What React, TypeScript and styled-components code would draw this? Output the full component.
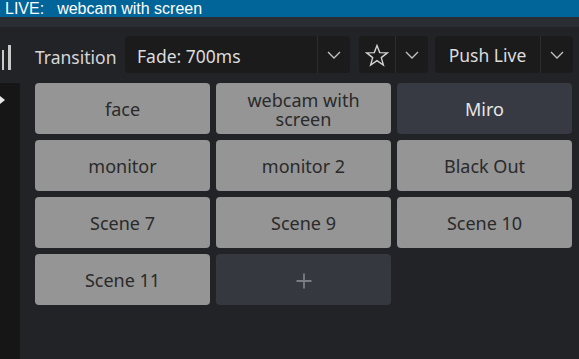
import React from "react";
import styled, { createGlobalStyle } from "styled-components";

const GlobalStyle = createGlobalStyle`
  html, body { margin: 0; padding: 0; background: #222327; overflow: hidden; }
  * { box-sizing: border-box; }
`;

const Page = styled.div`
  width: 579px;
  height: 359px;
  display: flex;
  flex-direction: column;
  background: #222327;
  font-family: "Noto Sans", "Open Sans", sans-serif;
`;

const LiveBar = styled.div`
  height: 17px;
  background: #02659a;
  color: #ffffff;
  font-family: "Liberation Sans", Arial, sans-serif;
  font-size: 16px;
  line-height: 17px;
  padding-left: 5px;
  display: flex;
  white-space: nowrap;
  overflow: hidden;
`;

const LiveLabel = styled.span`
  margin-right: 13px;
`;

const SubBar = styled.div`
  height: 10px;
  background: #2a2d32;
`;

const Main = styled.div`
  flex: 1;
  display: flex;
`;

const SideStrip = styled.div`
  width: 20px;
  display: flex;
  flex-direction: column;
`;

const SideTop = styled.div`
  height: 56px;
  position: relative;
`;

const SideBottom = styled.div`
  flex: 1;
  background: #161616;
  position: relative;
`;

const Bar = styled.div<{ $left: number; $top: number; $w: number; $h: number }>`
  position: absolute;
  left: ${(p) => p.$left}px;
  top: ${(p) => p.$top}px;
  width: ${(p) => p.$w}px;
  height: ${(p) => p.$h}px;
  background: #c9c9c9;
`;

const Arrow = styled.div`
  position: absolute;
  left: 0;
  top: 13px;
  width: 0;
  height: 0;
  border-top: 4px solid transparent;
  border-bottom: 4px solid transparent;
  border-left: 5px solid #e8e8e8;
`;

const Content = styled.div`
  flex: 1;
  padding: 9px 0 0 15px;
  display: flex;
  flex-direction: column;
`;

const Toolbar = styled.div`
  height: 37px;
  display: flex;
  align-items: center;
`;

const Label = styled.div`
  width: 90px;
  color: #d6d6d6;
  font-size: 17.5px;
  padding-top: 4px;
  white-space: nowrap;
`;

const Group = styled.div<{ $w: number; $ml: number }>`
  width: ${(p) => p.$w}px;
  margin-left: ${(p) => p.$ml}px;
  height: 37px;
  background: #1b1b1c;
  border-radius: 4px;
  display: flex;
  overflow: hidden;
`;

const Main1 = styled.div<{ $center?: boolean }>`
  flex: 1;
  display: flex;
  align-items: center;
  justify-content: ${(p) => (p.$center ? "center" : "flex-start")};
  padding-left: ${(p) => (p.$center ? 0 : 12)}px;
  padding-top: ${(p) => (p.$center ? 1 : 3)}px;
  color: #dcdcdc;
  font-size: 17.5px;
  white-space: nowrap;
  border-right: 1px solid #2c2d31;
`;

const Chevron = styled.div`
  width: 32px;
  display: flex;
  align-items: center;
  justify-content: center;
`;

const Grid = styled.div`
  margin-top: 10px;
  display: grid;
  grid-template-columns: repeat(3, 175px);
  grid-auto-rows: 51px;
  gap: 6px;
`;

const SceneButton = styled.div<{ $variant?: "normal" | "active" | "add" }>`
  border-radius: 4px;
  background: ${(p) =>
    p.$variant === "active" ? "#373a42" : p.$variant === "add" ? "#363840" : "#959595"};
  color: ${(p) => (p.$variant === "active" ? "#e6e6e6" : "#2a2a2a")};
  display: flex;
  align-items: center;
  justify-content: center;
  text-align: center;
  font-size: 18px;
  line-height: 19px;
  padding: 2px 30px 0;
`;

const ChevronIcon = () => (
  <svg width="14" height="8" viewBox="0 0 14 8">
    <path d="M1 1 L7 7 L13 1" fill="none" stroke="#c4c4c4" strokeWidth="1.3" />
  </svg>
);

const StarIcon = () => (
  <svg width="24" height="23" viewBox="0 0 24 23">
    <path
      d="M12 1.5 L14.7 8.6 L22.3 8.9 L16.3 13.6 L18.4 21 L12 16.7 L5.6 21 L7.7 13.6 L1.7 8.9 L9.3 8.6 Z"
      fill="none"
      stroke="#d2d2d2"
      strokeWidth="1.4"
      strokeLinejoin="miter"
    />
  </svg>
);

const PlusIcon = () => (
  <svg width="16" height="16" viewBox="0 0 16 16" aria-label="+">
    <path d="M8 0.5 V15.5 M0.5 8 H15.5" fill="none" stroke="#7b7d83" strokeWidth="1.8" />
  </svg>
);

const scenes: { name: string; variant?: "normal" | "active" | "add" }[] = [
  { name: "face" },
  { name: "webcam with screen" },
  { name: "Miro", variant: "active" },
  { name: "monitor" },
  { name: "monitor 2" },
  { name: "Black Out" },
  { name: "Scene 7" },
  { name: "Scene 9" },
  { name: "Scene 10" },
  { name: "Scene 11" },
];

export default function App() {
  return (
    <>
      <GlobalStyle />
      <Page>
        <LiveBar>
          <LiveLabel>LIVE:</LiveLabel>
          <span>webcam with screen</span>
        </LiveBar>
        <SubBar />
        <Main>
          <SideStrip>
            <SideTop>
              <Bar $left={2} $top={23} $w={2} $h={20} />
              <Bar $left={8} $top={18} $w={3} $h={25} />
            </SideTop>
            <SideBottom>
              <Arrow />
            </SideBottom>
          </SideStrip>
          <Content>
            <Toolbar>
              <Label>Transition</Label>
              <Group $w={225} $ml={0}>
                <Main1>Fade: 700ms</Main1>
                <Chevron>
                  <ChevronIcon />
                </Chevron>
              </Group>
              <Group $w={69} $ml={9}>
                <Main1 $center>
                  <StarIcon />
                </Main1>
                <Chevron>
                  <ChevronIcon />
                </Chevron>
              </Group>
              <Group $w={138} $ml={7}>
                <Main1 $center>Push Live</Main1>
                <Chevron>
                  <ChevronIcon />
                </Chevron>
              </Group>
            </Toolbar>
            <Grid>
              {scenes.map((s) => (
                <SceneButton key={s.name} $variant={s.variant ?? "normal"}>
                  {s.name}
                </SceneButton>
              ))}
              <SceneButton $variant="add">
                <PlusIcon />
              </SceneButton>
            </Grid>
          </Content>
        </Main>
      </Page>
    </>
  );
}
